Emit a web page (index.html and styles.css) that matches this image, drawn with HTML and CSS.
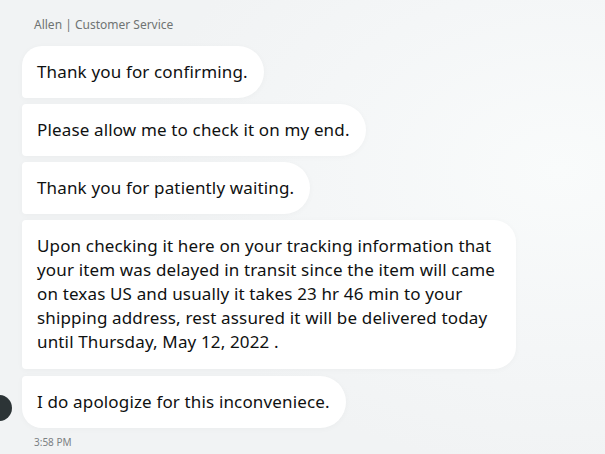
FILE: index.html
```html
<!DOCTYPE html>
<html lang="en">
<head>
<meta charset="utf-8">
<link rel="stylesheet" href="styles.css">
</head>
<body>
<div class="chat">
  <div class="sender">Allen | Customer Service</div>
  <div class="group">
    <div class="bubble first">Thank you for confirming.</div>
    <div class="bubble">Please allow me to check it on my end.</div>
    <div class="bubble">Thank you for patiently waiting.</div>
    <div class="bubble long">Upon checking it here on your tracking information that your item was delayed in transit since the item will came on texas US and usually it takes 23 hr 46 min to your shipping address, rest assured it will be delivered today until Thursday, May 12, 2022 .</div>
    <div class="bubble last">I do apologize for this inconveniece.<span class="avatar"></span></div>
  </div>
  <div class="time">3:58 PM</div>
</div>
</body>
</html>
```

FILE: styles.css
```css
html, body {
  margin: 0;
  padding: 0;
}
body {
  width: 605px;
  height: 454px;
  overflow: hidden;
  background: radial-gradient(ellipse 420px 300px at 560px 170px, #f9fbfb 0%, #f4f6f7 60%, #f1f3f4 100%);
  font-family: "Noto Sans", "Open Sans", sans-serif;
  color: #0f1111;
}
.chat {
  padding: 17px 0 0 22px;
}
.sender {
  font-size: 12px;
  line-height: 16px;
  color: #6f7373;
  padding-left: 12px;
  margin-bottom: 13px;
}
.group {
  display: flex;
  flex-direction: column;
  align-items: flex-start;
  gap: 6px;
}
.bubble {
  position: relative;
  background: #ffffff;
  font-size: 17px;
  letter-spacing: 0.15px;
  line-height: 24px;
  padding: 14px 16px 14px 15px;
  border-radius: 4px 26px 26px 4px;
  box-shadow: 0 1px 6px rgba(0, 0, 0, 0.03);
}
.bubble.first {
  border-top-left-radius: 20px;
}
.bubble.long {
  border-radius: 4px 22px 22px 4px;
  width: 462px;
  padding-right: 17px;
  padding-bottom: 15px;
}
.bubble.last {
  margin-top: 1px;
  border-bottom-left-radius: 20px;
}
.avatar {
  position: absolute;
  left: -36px;
  top: 19px;
  width: 26px;
  height: 26px;
  border-radius: 50%;
  background: #2c3436;
}
.time {
  font-size: 10px;
  line-height: 14px;
  color: #7b8083;
  padding: 7px 0 0 12px;
}
```
